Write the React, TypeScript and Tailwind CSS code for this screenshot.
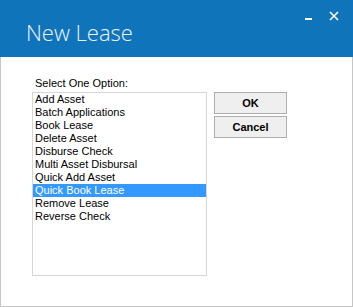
export default function App() {
  const options = [
    'Add Asset',
    'Batch Applications',
    'Book Lease',
    'Delete Asset',
    'Disburse Check',
    'Multi Asset Disbursal',
    'Quick Add Asset',
    'Quick Book Lease',
    'Remove Lease',
    'Reverse Check',
  ];
  const selected = 'Quick Book Lease';

  return (
    <div className="w-[353px] h-[307px] flex flex-col bg-white font-['Liberation_Sans',Arial,sans-serif] text-[11px] text-black">
      {/* Title bar */}
      <div className="h-[57px] bg-[#1074bb] flex items-start shrink-0">
        <div className="pl-[26px] pt-[18px] text-[22px] leading-[28px] font-light text-[#eef5fb] font-['Open_Sans',sans-serif]">
          New Lease
        </div>
        <div className="ml-auto flex items-start pr-[14px] pt-[11px]">
          <div className="w-[7px] h-[2px] bg-white mt-[7px] mr-[17px]" />
          <svg width="10" height="10" viewBox="0 0 10 10" className="block">
            <path d="M1 1 L9 9 M9 1 L1 9" stroke="white" strokeWidth="1.6" />
          </svg>
        </div>
      </div>

      {/* Body */}
      <div className="flex-1 border-x border-b border-[#c6c6c6] pl-[31px] pt-[20px]">
        <div className="leading-[13px] h-[15px] pl-[3px]">Select One Option:</div>
        <div className="flex items-start">
          <div className="w-[175px] h-[184px] border border-[#d6d6d6] flex flex-col">
            {options.map((o) => (
              <div
                key={o}
                className={
                  o === selected
                    ? 'h-[13px] leading-[13px] pl-[2px] bg-[#3399ff] text-white'
                    : 'h-[13px] leading-[13px] pl-[2px]'
                }
              >
                {o}
              </div>
            ))}
          </div>
          <div className="ml-[7px] flex flex-col gap-[2px]">
            <button className="w-[73px] h-[22px] border border-[#adadad] bg-[#efefef] font-bold text-[11px]">
              OK
            </button>
            <button className="w-[73px] h-[22px] border border-[#adadad] bg-[#efefef] font-bold text-[11px]">
              Cancel
            </button>
          </div>
        </div>
      </div>
    </div>
  );
}
